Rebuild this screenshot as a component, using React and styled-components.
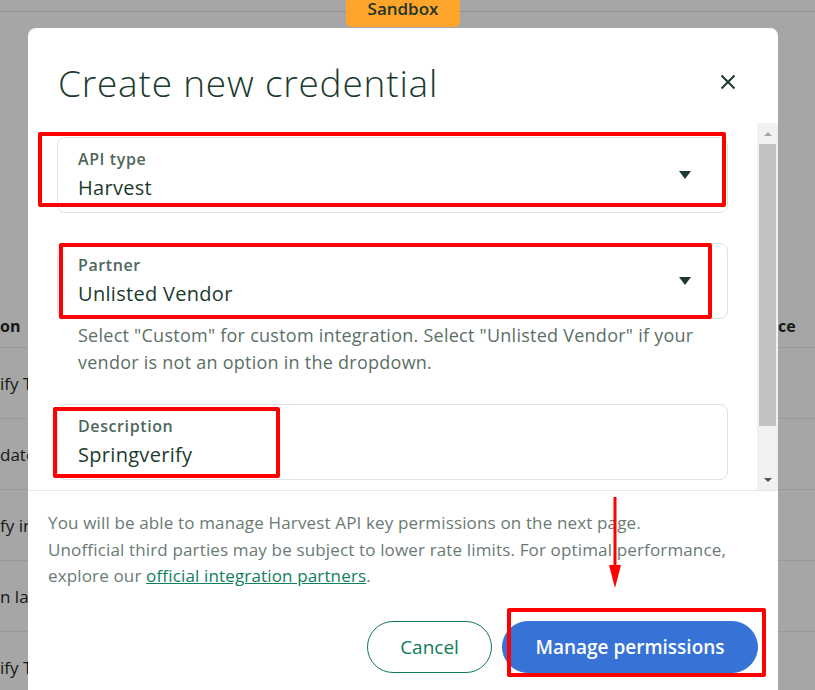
import React from 'react'
import styled, { createGlobalStyle } from 'styled-components'

const GlobalStyle = createGlobalStyle`
  html, body {
    margin: 0;
    padding: 0;
  }
  body {
    width: 815px;
    height: 690px;
    overflow: hidden;
    background: #fff;
    font-family: "Open Sans", Lato, sans-serif;
  }
`

const Page = styled.div`
  position: relative;
  width: 815px;
  height: 690px;
  overflow: hidden;
  background: #fff;
`

const TopBar = styled.div`
  height: 11px;
  border-bottom: 1px solid #dcdcdc;
`

const Table = styled.div`
  margin-top: 293px;
`

const Row = styled.div`
  display: flex;
  align-items: center;
  justify-content: space-between;
  height: ${p => (p.$head ? '42px' : '70px')};
  border-bottom: 1px solid #ebebeb;
  font-size: ${p => (p.$head ? '16px' : '17px')};
  font-weight: ${p => (p.$head ? 700 : 400)};
  color: #1d2b25;
`

const Cell = styled.span`
  width: ${p => (p.$right ? '37px' : '28px')};
  overflow: hidden;
  white-space: nowrap;
  text-align: ${p => (p.$right ? 'right' : 'left')};
  padding-right: ${p => (p.$right ? '20px' : '0')};
  box-sizing: border-box;
`

const Overlay = styled.div`
  position: absolute;
  inset: 0;
  background: rgba(0, 0, 0, 0.35);
`

const Badge = styled.div`
  position: absolute;
  top: 0;
  left: 346px;
  width: 114px;
  height: 27px;
  background: #ffa52b;
  border-radius: 0 0 6px 6px;
  text-align: center;
  font-size: 17px;
  line-height: 17px;
  font-weight: 600;
  color: #1d3428;
  z-index: 3;
`

const Modal = styled.div`
  position: absolute;
  top: 28px;
  left: 28px;
  width: 750px;
  bottom: -40px;
  background: #fff;
  border-radius: 8px 8px 0 0;
  display: flex;
  flex-direction: column;
  z-index: 2;
`

const Header = styled.div`
  display: flex;
  justify-content: space-between;
  align-items: flex-start;
  height: 95px;
  box-sizing: border-box;
  padding: 33px 42px 0 30px;
`

const Title = styled.h2`
  margin: 0;
  font-size: 37px;
  line-height: 44px;
  font-weight: 300;
  letter-spacing: 0.8px;
  color: #1b3b2e;
`

const Close = styled.button`
  margin-top: 13px;
  padding: 0;
  border: 0;
  background: none;
  width: 16px;
  height: 16px;
  display: flex;
`

const Body = styled.div`
  display: flex;
  height: 367px;
`

const Content = styled.div`
  flex: 1;
  overflow: hidden;
  padding: 14px 29px 0 29px;
`

const Field = styled.div`
  display: flex;
  align-items: center;
  justify-content: space-between;
  border: 1px solid #e2e2e2;
  border-radius: 8px;
  padding: 12px 36px 12px 20px;
  margin-top: ${p => p.$gap || 0}px;
`

const FieldText = styled.div`
  display: flex;
  flex-direction: column;
  gap: 8px;
`

const Label = styled.span`
  font-size: 16px;
  line-height: 18px;
  font-weight: 600;
  letter-spacing: 0.6px;
  color: #4f665c;
`

const Value = styled.span`
  font-size: 20px;
  line-height: 24px;
  letter-spacing: 0.3px;
  color: #1b3b2e;
`

const Caret = styled.span`
  width: 0;
  height: 0;
  border-left: 6.5px solid transparent;
  border-right: 6.5px solid transparent;
  border-top: 8px solid #1d3a2f;
`

const Helper = styled.p`
  margin: 3px 0 0;
  padding-left: 21px;
  font-size: 18px;
  line-height: 27px;
  letter-spacing: 0.25px;
  color: #5b6f66;
`

const Scrollbar = styled.div`
  width: 21px;
  background: #f1f1f1;
  display: flex;
  flex-direction: column;
`

const ScrollButton = styled.div`
  height: 21px;
  display: flex;
  align-items: center;
  justify-content: center;
  &::after {
    content: '';
    border-left: 4px solid transparent;
    border-right: 4px solid transparent;
    ${p => (p.$down
      ? 'border-top: 4px solid #505050;'
      : 'border-bottom: 4px solid #a3a3a3;')}
  }
`

const ThumbArea = styled.div`
  flex: 1;
  padding: 0 2px;
`

const Thumb = styled.div`
  height: 282px;
  background: #c1c1c1;
`

const Footer = styled.div`
  border-top: 1px solid #e6e6e6;
  padding: 19px 20px 0 20px;
`

const FooterText = styled.p`
  margin: 0;
  font-size: 17px;
  line-height: 26.5px;
  letter-spacing: 0.15px;
  color: #6a7a73;
  a {
    color: #11805c;
    text-decoration: underline;
  }
`

const Actions = styled.div`
  display: flex;
  justify-content: flex-end;
  gap: 10px;
  margin-top: 31px;
`

const Button = styled.button`
  height: 52px;
  border-radius: 26px;
  font-family: "Open Sans", Lato, sans-serif;
  font-size: 19px;
  font-weight: ${p => (p.$primary ? 600 : 400)};
  width: ${p => (p.$primary ? '256px' : '125px')};
  border: 1px solid ${p => (p.$primary ? '#3773d6' : '#0f7b57')};
  background: ${p => (p.$primary ? '#3773d6' : '#fff')};
  color: ${p => (p.$primary ? '#fff' : '#0f7b57')};
`

const Mark = styled.div`
  position: absolute;
  box-sizing: border-box;
  border: 4px solid #ff0000;
  border-radius: 2px;
  z-index: 4;
  left: ${p => p.$x}px;
  top: ${p => p.$y}px;
  width: ${p => p.$w}px;
  height: ${p => p.$h}px;
`

const Arrow = styled.svg`
  position: absolute;
  left: 608px;
  top: 497px;
  z-index: 4;
`

const Dropdown = ({ label, value, gap }) => (
  <Field $gap={gap}>
    <FieldText>
      <Label>{label}</Label>
      <Value>{value}</Value>
    </FieldText>
    <Caret />
  </Field>
)

const rows = ['ify T', 'date', 'fy in', 'n lab', 'ify T']

const App = () => {
  return (
    <>
      <GlobalStyle />
      <Page>
        <TopBar />
        <Table>
          <Row $head><Cell>on</Cell><Cell $right>ce</Cell></Row>
          {rows.map((r, i) => (
            <Row key={i}><Cell>{r}</Cell></Row>
          ))}
        </Table>
        <Overlay />
        <Badge>Sandbox</Badge>
        <Modal>
          <Header>
            <Title>Create new credential</Title>
            <Close aria-label="Close">
              <svg width="16" height="16" viewBox="0 0 16 16">
                <path d="M1.5 1.5 L14.5 14.5 M14.5 1.5 L1.5 14.5" stroke="#1f3a30" strokeWidth="2" />
              </svg>
            </Close>
          </Header>
          <Body>
            <Content>
              <Dropdown label="API type" value="Harvest" />
              <Dropdown label="Partner" value="Unlisted Vendor" gap={30} />
              <Helper>
                Select "Custom" for custom integration. Select "Unlisted Vendor" if your<br />
                vendor is not an option in the dropdown.
              </Helper>
              <Field $gap={28}>
                <FieldText>
                  <Label>Description</Label>
                  <Value>Springverify</Value>
                </FieldText>
              </Field>
            </Content>
            <Scrollbar>
              <ScrollButton />
              <ThumbArea><Thumb /></ThumbArea>
              <ScrollButton $down />
            </Scrollbar>
          </Body>
          <Footer>
            <FooterText>
              You will be able to manage Harvest API key permissions on the next page.<br />
              Unofficial third parties may be subject to lower rate limits. For optimal performance,<br />
              explore our <a href="#partners">official integration partners</a>.
            </FooterText>
            <Actions>
              <Button>Cancel</Button>
              <Button $primary>Manage permissions</Button>
            </Actions>
          </Footer>
        </Modal>
        <Mark $x={38} $y={132} $w={688} $h={75} />
        <Mark $x={59} $y={243} $w={653} $h={76} />
        <Mark $x={53} $y={407} $w={227} $h={71} />
        <Mark $x={507} $y={608} $w={259} $h={69} />
        <Arrow width="14" height="92" viewBox="0 0 14 92">
          <path d="M7 0 L7 72" stroke="#ff0000" strokeWidth="3" />
          <path d="M1 68 L13 68 L7 91 Z" fill="#ff0000" />
        </Arrow>
      </Page>
    </>
  )
}

export default App
